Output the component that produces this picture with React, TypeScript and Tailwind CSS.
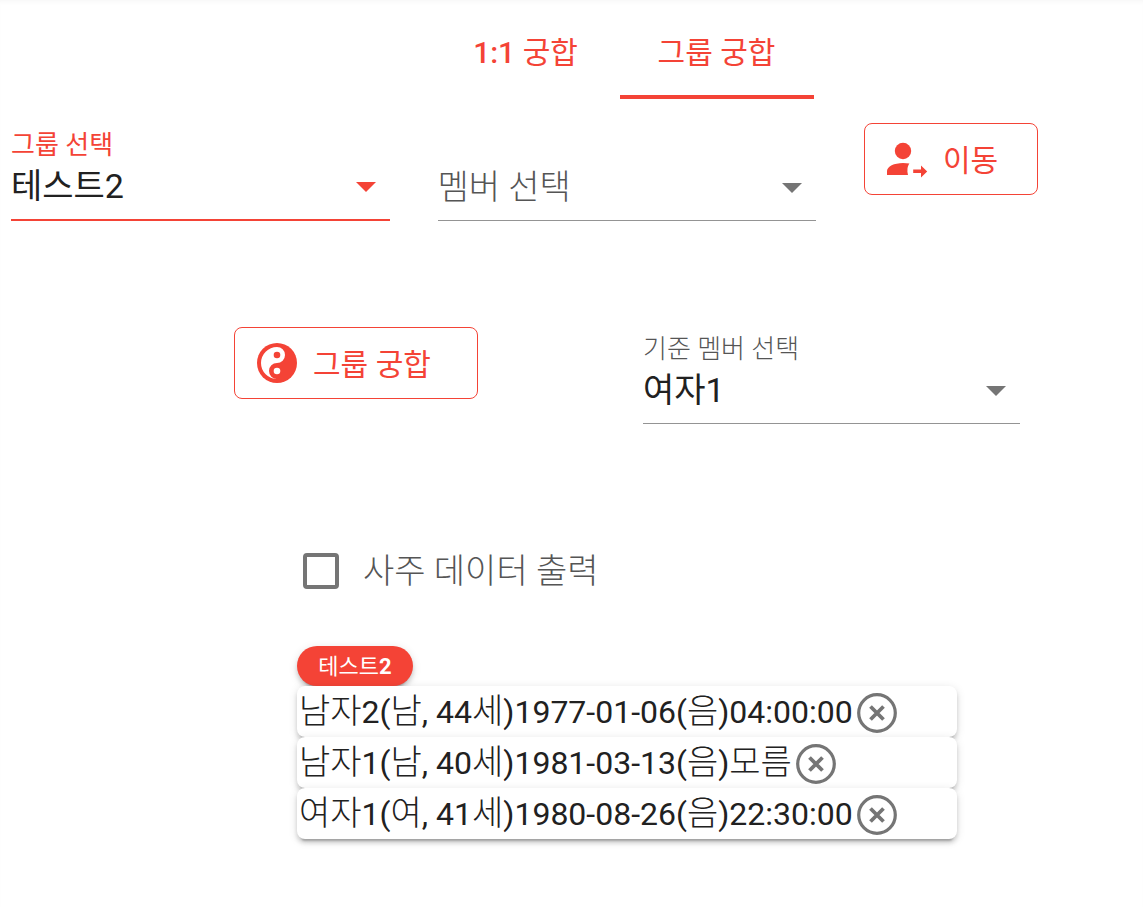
import { useState } from "react";
import type { ReactNode } from "react";
import clsx from "clsx";

const FONT = "font-['Roboto','Noto_Sans_CJK_KR',sans-serif]";
const ELEVATION =
  "shadow-[0_6px_2px_-4px_rgba(0,0,0,0.2),0_4px_4px_0_rgba(0,0,0,0.14),0_2px_10px_0_rgba(0,0,0,0.12)]";

interface Member {
  name: string;
  info: string;
  birth: string;
  time: string;
}

const initialMembers: Member[] = [
  { name: "남자2", info: "(남, 44세)", birth: "1977-01-06(음)", time: "04:00:00" },
  { name: "남자1", info: "(남, 40세)", birth: "1981-03-13(음)", time: "모름" },
  { name: "여자1", info: "(여, 41세)", birth: "1980-08-26(음)", time: "22:30:00" },
];

const AccountArrowIcon = () => (
  <svg viewBox="0 0 24 24" className="size-12 shrink-0" fill="currentColor" aria-hidden="true">
    <circle cx="10" cy="8" r="4.1" />
    <path d="M10 14c-4.42 0-8 1.79-8 4v2h10.5c-.3-1.1-.4-2.2-.25-3.3.15-.9.5-1.8.95-2.4C12.2 14.1 11.1 14 10 14z" />
    <path d="M15.1 17.3h3.9v-2.1l3.1 3-3.1 3V19h-3.9z" />
  </svg>
);

const YinYangIcon = () => (
  <svg viewBox="0 0 24 24" className="size-12 shrink-0" aria-hidden="true">
    <circle cx="12" cy="12" r="10" fill="currentColor" />
    <path d="M12 4A8 8 0 0 0 12 20A4 4 0 0 1 12 12A4 4 0 0 0 12 4z" fill="white" />
    <circle cx="12" cy="8" r="1.65" fill="currentColor" />
    <circle cx="12" cy="16" r="1.65" fill="white" />
  </svg>
);

const CloseCircleIcon = () => (
  <svg viewBox="0 0 40 40" className="size-10" fill="none" stroke="currentColor" aria-hidden="true">
    <circle cx="20" cy="20" r="18.3" strokeWidth="3.2" />
    <path d="M13.5 13.5l13 13M26.5 13.5l-13 13" strokeWidth="3.8" />
  </svg>
);

// Hangul is set lighter and a bit larger than the digits around it
const MixedText = ({ text }: { text: string }) => (
  <span>
    {text.split(/([가-힣]+)/).map((part, i) =>
      i % 2 ? (
        <span key={i} className="text-[34px] leading-none font-light">
          {part}
        </span>
      ) : (
        part
      )
    )}
  </span>
);

interface SelectFieldProps {
  id: string;
  label: string;
  options: string[];
  active?: boolean;
  empty?: boolean;
}

const SelectField = ({ id, label, options, active, empty }: SelectFieldProps) => {
  const [value, setValue] = useState(empty ? "" : options[0]);

  return (
    <div
      className={clsx(
        "min-w-0 flex-1",
        active ? "border-b-2 border-[#f44336]" : "border-b border-[#949494]"
      )}
    >
      <label
        htmlFor={id}
        className={clsx(
          "block h-8 text-[26px] leading-8",
          active ? "text-[#f44336]" : "font-light text-[#555]",
          !value && "invisible"
        )}
      >
        {label}
      </label>
      <div className="relative">
        <select
          id={id}
          aria-label={label}
          value={value}
          onChange={(e) => setValue(e.target.value)}
          className={clsx(
            "block h-[58px] w-full appearance-none bg-transparent pb-2 text-[34px] outline-none",
            value ? "text-[#212121]" : "font-light text-[#555]"
          )}
        >
          {!value && <option value="">{label}</option>}
          {options.map((option) => (
            <option key={option}>{option}</option>
          ))}
        </select>
        <svg
          viewBox="0 0 20 10"
          className={clsx(
            "pointer-events-none absolute top-[21px] right-3.5 h-2.5 w-5",
            active ? "text-[#f44336]" : "text-[#757575]"
          )}
          fill="currentColor"
          aria-hidden="true"
        >
          <path d="M0 0h20L10 10z" />
        </svg>
      </div>
    </div>
  );
};

interface OutlinedButtonProps {
  icon: ReactNode;
  className: string;
  children: ReactNode;
}

const OutlinedButton = ({ icon, className, children }: OutlinedButtonProps) => (
  <button
    type="button"
    className={clsx(
      "flex h-18 shrink-0 items-center gap-3 rounded-lg border border-[#f44336] px-4.5 text-[30px] text-[#f44336]",
      className
    )}
  >
    {icon}
    <span className="pt-0.5">{children}</span>
  </button>
);

const App = () => {
  const [tab, setTab] = useState(1);
  const [members, setMembers] = useState(initialMembers);

  return (
    <div
      className={clsx(
        FONT,
        "min-h-screen bg-white text-[#212121] shadow-[inset_0_4px_4px_-2px_rgba(0,0,0,0.03)]"
      )}
    >
      <nav className="flex justify-center pl-[102px] text-[30px] text-[#f44336]" role="tablist">
        {["1:1 궁합", "그룹 궁합"].map((name, i) => (
          <button
            key={name}
            type="button"
            role="tab"
            aria-selected={tab === i}
            onClick={() => setTab(i)}
            className={clsx(
              "h-[99px] border-b-4 px-8",
              i === 0 ? "min-w-[188px]" : "min-w-[194px]",
              tab === i ? "border-[#f44336]" : "border-transparent"
            )}
          >
            <span className="block pt-2.5">
              {name.split(" ").map((word, n) => (
                <span key={word} className={clsx(word === "1:1" && "font-medium")}>
                  {n > 0 && " "}
                  {word}
                </span>
              ))}
            </span>
          </button>
        ))}
      </nav>

      <div className="flex items-start gap-12 pt-6 pr-[105px] pl-[11px]">
        <div className="flex flex-1 items-end gap-12 pt-1.5">
          <SelectField id="group" label="그룹 선택" options={["테스트2"]} active />
          <SelectField id="member" label="멤버 선택" options={["남자2", "남자1", "여자1"]} empty />
        </div>
        <OutlinedButton icon={<AccountArrowIcon />} className="min-w-[174px]">
          이동
        </OutlinedButton>
      </div>

      <div className="flex items-start justify-between gap-12 pt-[106px] pr-[123px] pl-[234px]">
        <OutlinedButton icon={<YinYangIcon />} className="min-w-[244px]">
          그룹 궁합
        </OutlinedButton>
        <div className="flex w-[377px] pt-1.5">
          <SelectField id="base" label="기준 멤버 선택" options={["여자1", "남자1", "남자2"]} />
        </div>
      </div>

      <div className="pt-[123px] pr-[186px] pb-14 pl-[297px]">
        <label className="flex items-center gap-6 pl-1.5 text-[34px] leading-[48px] font-light text-[#555]">
          <input
            type="checkbox"
            className="size-9 appearance-none rounded-sm border-4 border-[#757575] checked:bg-[#f44336]"
          />
          사주 데이터 출력
        </label>

        <section className="pt-[51px]">
          <span
            className={clsx(
              ELEVATION,
              "flex h-10 w-fit min-w-29 items-center justify-center rounded-full bg-[#f44336] px-5 text-[22px] text-white"
            )}
          >
            테스트<b>2</b>
          </span>
          <ul>
            {members.map((m) => (
              <li
                key={m.name}
                className={clsx(
                  ELEVATION,
                  "flex h-[51px] items-center gap-1 rounded-lg bg-white pl-0.5 text-[32px]"
                )}
              >
                <MixedText text={`${m.name}${m.info}${m.birth}${m.time}`} />
                <button
                  type="button"
                  aria-label={`${m.name} 삭제`}
                  onClick={() => setMembers(members.filter((x) => x !== m))}
                  className="pt-0.5 text-[#757575]"
                >
                  <CloseCircleIcon />
                </button>
              </li>
            ))}
          </ul>
        </section>
      </div>
    </div>
  );
};

export default App;
